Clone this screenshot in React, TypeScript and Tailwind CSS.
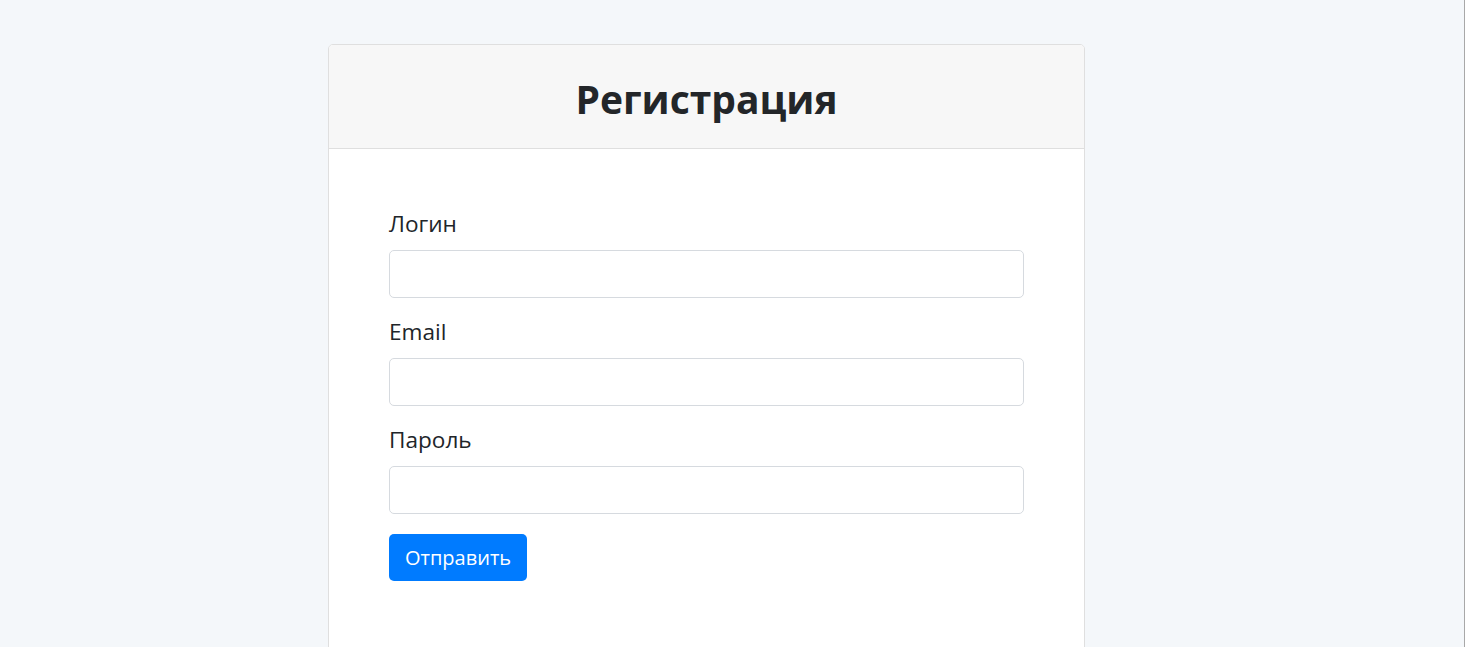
const fields = [
  { label: "Логин", type: "text" },
  { label: "Email", type: "email" },
  { label: "Пароль", type: "password" },
];

export default function App() {
  return (
    <main className="min-h-[647px] bg-[#f4f7fa] border-r border-[#a8a8a8] pt-[44px] font-['Open_Sans',sans-serif] text-[#212529]">
      <section className="ml-[328px] w-[757px] bg-white border border-[#dfdfdf] rounded-[5px] overflow-hidden">
        <header className="h-[104px] flex items-center justify-center pt-[4px] bg-[#f7f7f7] border-b border-[#dfdfdf]">
          <h1 className="text-[39px] font-bold leading-none text-[#232629]">Регистрация</h1>
        </header>

        <form className="flex flex-col px-[60px] pt-[60px] pb-[80px]">
          {fields.map((f) => (
            <div key={f.label} className="flex flex-col mb-[19px]">
              <label className="text-[22.6px] leading-[30px] mb-[11px]">{f.label}</label>
              <input
                type={f.type}
                className="h-[48px] w-full px-3 border border-[#d6dadf] rounded-[5px] bg-white focus:outline-none"
              />
            </div>
          ))}
          <button
            type="button"
            className="mt-[1px] self-start h-[47px] px-[16px] bg-[#007bff] text-white text-[20px] rounded-[5px]"
          >
            Отправить
          </button>
        </form>
      </section>
    </main>
  );
}
